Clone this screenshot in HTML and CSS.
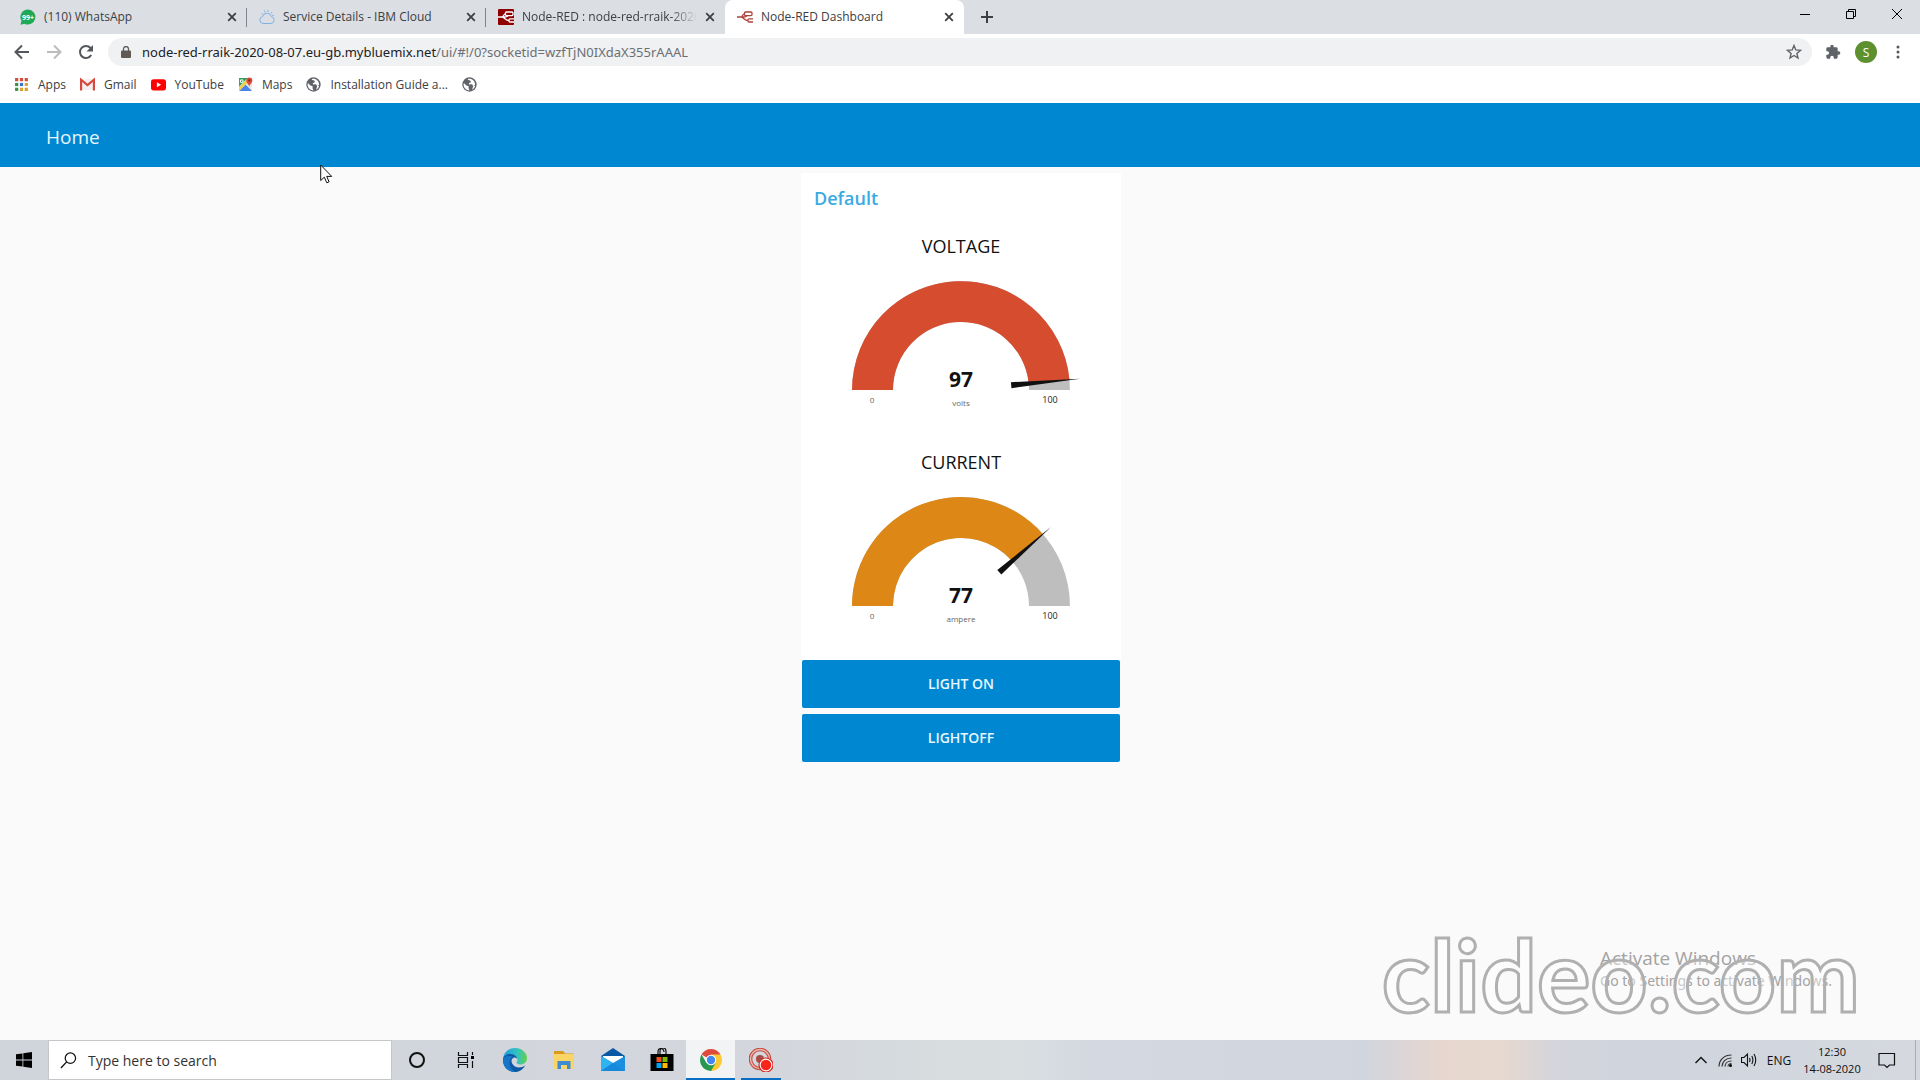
FILE: index.html
```html
<!DOCTYPE html>
<html lang="en">
<head>
<meta charset="utf-8">
<title>Node-RED Dashboard</title>
<link rel="stylesheet" href="styles.css">
</head>
<body>
<svg class="defs" aria-hidden="true">
  <symbol id="close" viewBox="0 0 10 10"><path d="M1.2 1.2l7.6 7.6M8.8 1.2L1.2 8.8" fill="none" stroke="#3c4043" stroke-width="1.8"/></symbol>
  <symbol id="nodered" viewBox="0 0 16 16"><g fill="none" stroke="currentColor" stroke-width="1.3"><rect x="7.5" y="3" width="7.5" height="3.6" rx="1"/><rect x="11" y="9.8" width="6" height="3.2" rx="1"/><path d="M0 8h3.5c2 0 2-3 4-3M0 8h3.5c3.500 0 3.500 3.500 7.500 3.500M4 8h3c2.500 0 2.500-1 3-1.500"/></g></symbol>
  <symbol id="globe" viewBox="0 0 24 24"><circle cx="12" cy="12" r="11.500" fill="#5f6368"/><path d="M3 9.500l4.500 4.500 3 .5v3.500l1.500 3.500c-5 0-9-3.500-9.500-9zM9 3.500c1 2 4.500 1 5 3.500s-3.500 2-3 4 5-.5 6 2 3 1 4-.5c0-5-3-8.500-6.500-9.500-2-.5-4-.5-5.500.5zM18 14.500l3 0c-1 3-2.500 4.500-5 6z" fill="#fff"/></symbol>
</svg>

<header class="browser">
  <nav class="tabs" aria-label="Tabs">
    <div class="tab">
      <svg class="icon16" viewBox="0 0 16 16"><path d="M8 .5a7.500 7.500 0 1 1-3.500 14.200L.5 15.800l1-4A7.500 7.500 0 0 1 8 .5z" fill="#1fa855"/><text x="8" y="11" class="badge">99+</text></svg>
      <span class="tab-title">(110) WhatsApp</span>
      <button class="tab-close" aria-label="Close tab"><svg><use href="#close"/></svg></button>
    </div>
    <div class="tab">
      <svg class="icon16" viewBox="0 0 16 16"><path d="M4 14.500a3.500 3.500 0 0 1-.4-6.900 4.600 4.600 0 0 1 8.900.2 3.400 3.400 0 0 1-.5 6.700zM4 5.500l-1.500-1M6 3.500L5.500 1.500M9 3V1M12 4.500l1-1.500M13 7l2-1" fill="none" stroke="#7fb2e6"/></svg>
      <span class="tab-title">Service Details - IBM Cloud</span>
      <button class="tab-close" aria-label="Close tab"><svg><use href="#close"/></svg></button>
    </div>
    <div class="tab last">
      <svg class="icon16 red-tile" viewBox="0 0 16 16"><use href="#nodered"/></svg>
      <span class="tab-title faded">Node-RED : node-red-rraik-2020</span>
      <button class="tab-close" aria-label="Close tab"><svg><use href="#close"/></svg></button>
    </div>
    <div class="tab active">
      <svg class="icon16 red-mark" viewBox="0 0 16 16"><use href="#nodered"/></svg>
      <span class="tab-title">Node-RED Dashboard</span>
      <button class="tab-close" aria-label="Close tab"><svg><use href="#close"/></svg></button>
    </div>
    <button class="new-tab" aria-label="New tab"><svg viewBox="0 0 12 12"><path d="M6 0v12M0 6h12" stroke="#3c4043" stroke-width="2"/></svg></button>
    <div class="window-controls">
      <button aria-label="Minimize"><svg viewBox="0 0 12 12"><path d="M1 6.500h10" stroke="#000"/></svg></button>
      <button aria-label="Restore"><svg viewBox="0 0 12 12"><path d="M1.500 3.500h7v7h-7zM3.500 3.500v-2h7v7h-2" fill="none" stroke="#000"/></svg></button>
      <button aria-label="Close"><svg viewBox="0 0 12 12"><path d="M1 1l10 10M11 1L1 11" stroke="#000"/></svg></button>
    </div>
  </nav>

  <div class="toolbar">
    <button class="nav-button" aria-label="Back"><svg viewBox="0 0 16 16"><path d="M15 8H2M8 1.500L1.500 8 8 14.500" fill="none" stroke="#54575b" stroke-width="2"/></svg></button>
    <button class="nav-button" aria-label="Forward"><svg viewBox="0 0 16 16"><path d="M1 8h13M8 1.500L14.500 8 8 14.500" fill="none" stroke="#babcbe" stroke-width="2"/></svg></button>
    <button class="nav-button" aria-label="Reload"><svg viewBox="0 0 16 16"><path d="M13.200 11A6 6 0 1 1 12.500 4L14 5.500" fill="none" stroke="#54575b" stroke-width="2"/><path d="M15 1v6.500H8.500z" fill="#54575b"/></svg></button>
    <div class="address">
      <svg class="lock" viewBox="0 0 10 12"><path d="M1 4.500h8a1 1 0 0 1 1 1V11a1 1 0 0 1-1 1H1a1 1 0 0 1-1-1V5.500a1 1 0 0 1 1-1z" fill="#5f5a55"/><path d="M2.500 5V3a2.500 2.500 0 0 1 5 0v2" fill="none" stroke="#5f5a55" stroke-width="1.300"/></svg>
      <a class="url" href="#"><span>node-red-rraik-2020-08-07.eu-gb.mybluemix.net</span>/ui/#!/0?socketid=wzfTjN0IXdaX355rAAAL</a>
      <button class="star" aria-label="Bookmark this tab"><svg viewBox="0 0 16 16"><path d="M8 1.500l1.800 4.400 4.700.4-3.600 3.100 1.100 4.600L8 11.500 4 14l1.100-4.600L1.500 6.300l4.700-.4z" fill="none" stroke="#5f6368" stroke-width="1.400"/></svg></button>
    </div>
    <button class="ext" aria-label="Extensions"><svg viewBox="0 0 24 24"><path d="M20.500 11H19V7a2 2 0 0 0-2-2h-4V3.500a2.500 2.500 0 0 0-5 0V5H4a2 2 0 0 0-2 2v3.800h1.500a2.700 2.700 0 0 1 0 5.400H2V20a2 2 0 0 0 2 2h3.800v-1.500a2.700 2.700 0 0 1 5.400 0V22H17a2 2 0 0 0 2-2v-4h1.500a2.500 2.500 0 0 0 0-5z" fill="#5f6368"/></svg></button>
    <button class="avatar" aria-label="Profile">S</button>
    <button class="menu" aria-label="Menu"><svg viewBox="0 0 4 14"><circle cx="2" cy="2" r="1.500"/><circle cx="2" cy="7" r="1.500"/><circle cx="2" cy="12" r="1.500"/></svg></button>
  </div>

  <nav class="bookmarks" aria-label="Bookmarks">
    <a href="#"><svg viewBox="0 0 14 14"><path d="M1 1h3v3H1zM5.500 1h3v3h-3zM10 1h3v3h-3z" fill="#d0513d"/><path d="M1 5.500h3v3H1z" fill="#3f8f4f"/><path d="M5.500 5.500h3v3h-3z" fill="#3f74d0"/><path d="M10 5.500h3v3h-3zM5.500 10h3v3h-3zM10 10h3v3h-3z" fill="#d9a32e"/><path d="M1 10h3v3H1z" fill="#3f8f4f"/></svg>Apps</a>
    <a href="#"><svg viewBox="0 0 14 14"><path d="M.5 2h13v10H.5z" fill="#f4eeee"/><path d="M1 12.500V2.500l6 5 6-5v10" fill="none" stroke="#d5483b" stroke-width="2"/></svg>Gmail</a>
    <a href="#"><svg viewBox="0 0 14 14"><rect y="2" width="14" height="10.500" rx="2.500" fill="#f00"/><path d="M5.500 5v4.500l4-2.200z" fill="#fff"/></svg>YouTube</a>
    <a href="#"><svg viewBox="0 0 14 14"><path d="M1 1h12v12H1z" fill="#e8e8e4"/><path d="M1 1h8L1 9z" fill="#2f9e58"/><path d="M1 13l6-6 6 6z" fill="#4a84e8"/><path d="M1 13V9.500L9.500 1l1.500 2L1 13z" fill="#f3cf4b"/><path d="M10.500 9C10 6.500 7.800 6 7.800 3.200a2.800 2.800 0 0 1 5.600 0C13.400 6 11 6.500 10.500 9z" fill="#dd4b3e"/><circle cx="10.600" cy="3.200" r="1" fill="#7d2019"/><circle cx="3.500" cy="3.800" r="1.300" fill="none" stroke="#fff"/></svg>Maps</a>
    <a href="#"><svg><use href="#globe"/></svg>Installation Guide a...</a>
    <a href="#" aria-label="Untitled bookmark"><svg><use href="#globe"/></svg></a>
  </nav>
</header>

<div class="page-header"><h1>Home</h1></div>

<main class="dashboard">
  <section class="group">
    <div class="card">
      <h2>Default</h2>
      <div class="gauge">
        <h3>VOLTAGE</h3>
        <svg viewBox="0 0 320 150" role="img" aria-label="97 volts">
          <path d="M51 122A109 109 0 0 1 269 122H228A68 68 0 0 0 92 122z" fill="#bebebe"/>
          <path d="M51 122A109 109 0 0 1 268.500 111.700L227.700 115.600A68 68 0 0 0 92 122z" fill="#d64c2f"/>
          <path d="M209.900 114.200L279 110.700 210.500 120.200z" fill="#111"/>
          <text x="160" y="119" class="value">97</text>
          <text x="160" y="138" class="units">volts</text>
          <text x="71" y="135" class="min">0</text>
          <text x="249" y="135" class="max">100</text>
        </svg>
      </div>
      <div class="gauge">
        <h3>CURRENT</h3>
        <svg viewBox="0 0 320 150" role="img" aria-label="77 ampere">
          <path d="M51 122A109 109 0 0 1 269 122H228A68 68 0 0 0 92 122z" fill="#bebebe"/>
          <path d="M51 122A109 109 0 0 1 241.800 49.900L211 77A68 68 0 0 0 92 122z" fill="#dc8716"/>
          <path d="M196.300 86L250 43 200.300 90.500z" fill="#111"/>
          <text x="160" y="119" class="value">77</text>
          <text x="160" y="138" class="units">ampere</text>
          <text x="71" y="135" class="min">0</text>
          <text x="249" y="135" class="max">100</text>
        </svg>
      </div>
    </div>
    <div class="actions">
      <button>LIGHT ON</button>
      <button>LIGHTOFF</button>
    </div>
  </section>

  <div class="activation">
    <strong>Activate Windows</strong>
    <span>Go to Settings to activate Windows.</span>
  </div>
  <div class="watermark">clideo.com</div>
</main>

<footer class="taskbar">
  <button class="start" aria-label="Start"><svg viewBox="0 0 16 16"><path d="M0 2.300L6.500 1.400v6.200H0zM7.300 1.300L16 0v7.600H7.300zM0 8.400h6.500v6.200L0 13.700zM7.300 8.400H16V16l-8.700-1.300z"/></svg></button>
  <label class="search">
    <svg viewBox="0 0 18 18"><circle cx="11" cy="6.500" r="5.500" fill="none" stroke="#111" stroke-width="1.300"/><path d="M7 10.500L1 17" stroke="#111" stroke-width="1.400"/></svg>
    <input type="text" placeholder="Type here to search" aria-label="Search">
  </label>
  <div class="apps">
    <button aria-label="Cortana"><svg viewBox="0 0 24 24"><circle cx="12" cy="12" r="7" fill="none" stroke="#111" stroke-width="2"/></svg></button>
    <button aria-label="Task View"><svg viewBox="0 0 24 24"><path d="M4.500 4v3.500h9V4M4.500 20v-3.500h9V20M4.500 9.500h9v5h-9zM18.500 4v3M18.500 13v7" fill="none" stroke="#111" stroke-width="1.200"/><path d="M17 8h3v3h-3z"/></svg></button>
    <button aria-label="Microsoft Edge"><svg viewBox="0 0 24 24"><defs><linearGradient id="edge-top"><stop stop-color="#1f9be0"/><stop offset=".6" stop-color="#32c3c0"/><stop offset="1" stop-color="#62d14a"/></linearGradient></defs><path d="M0 12C0 5 5 0 12 0s12 5 12 10-4 6.500-7 6.500-4-1.500-3-3 .5-4.500-3-4.500-6 3-6 8z" fill="url(#edge-top)"/><path d="M0 12c0-4 4-6.500 8-6 4 .5 6 3 6 5-1-1.500-3-2-4.500-.5-3 3 1 9 6 9 3 0 5-1 6.500-2C20 21.500 16.500 24 12 24 5 24 0 19 0 12z" fill="#0c59a4"/><path d="M7 12c-1.500 5 1 10 6 12C6 24.500 0 19 0 12c0-2 3-4 6-4 2 0 3 .5 4 1.200C8.500 9.500 7.500 10.500 7 12z" fill="#1676c8"/></svg></button>
    <button aria-label="File Explorer"><svg viewBox="0 0 24 24"><path d="M2 3h9l2 2.500h9V8H2z" fill="#d99a1d"/><path d="M2 6h20v15H2z" fill="#fbd468"/><path d="M5.500 21v-8h13v8h-3.500v-4h-6v4z" fill="#3f8dd0"/></svg></button>
    <button aria-label="Mail"><svg viewBox="0 0 24 24"><path d="M0 8l12-8 12 8v3H0z" fill="#0a58a5"/><path d="M2 8h20v9H2z" fill="#fff"/><path d="M0 8l12 7 12-7v15H0z" fill="#1d8fe0"/><path d="M0 8l12 7L0 23z" fill="#30b4f0"/><path d="M0 23l12-8 12 8z" fill="#1689dc"/></svg></button>
    <button aria-label="Microsoft Store"><svg viewBox="0 0 24 24"><path d="M8 7V4a3 3.500 0 0 1 6 0M10 6V3a3 3 0 0 1 6 0v4" fill="none" stroke="#111" stroke-width="1.200"/><path d="M.5 6h23v17H.5z"/><path d="M6.500 9h5v5h-5z" fill="#f25022"/><path d="M12.500 9h5v5h-5z" fill="#7fba00"/><path d="M6.500 15h5v5h-5z" fill="#00a4ef"/><path d="M12.500 15h5v5h-5z" fill="#ffb900"/></svg></button>
    <button class="current" aria-label="Google Chrome"><svg viewBox="0 0 24 24"><path d="M12 12L2.500 6.500A11 11 0 0 1 21.500 6.500z" fill="#e04a3d"/><path d="M12 12V6.500h9.500A11 11 0 0 1 12 23z" fill="#fbc934"/><path d="M12 12l4.500 3L12 23A11 11 0 0 1 2.500 6.500L7.500 15z" fill="#27994f"/><circle cx="12" cy="12" r="5.200" fill="#fff"/><circle cx="12" cy="12" r="4.200" fill="#4387f0"/></svg></button>
    <button class="running" aria-label="Screen recorder"><svg viewBox="0 0 24 24"><circle cx="11" cy="11" r="9.500" fill="none" stroke="#bf4a42" stroke-width="3.500"/><circle cx="11" cy="11" r="9.500" fill="none" stroke="#f2b8ae" stroke-width="1.400"/><circle cx="11" cy="11" r="4" fill="#a94a44"/><circle cx="17" cy="17" r="7" fill="#fff" stroke="#d8251b" stroke-width="1.200"/><circle cx="17" cy="17" r="5.300" fill="#f6261b"/></svg></button>
  </div>
  <div class="tray">
    <button class="tray-icon" aria-label="Show hidden icons"><svg viewBox="0 0 16 16"><path d="M2.500 11L8 5.500l5.500 5.500" fill="none" stroke="#111" stroke-width="1.400"/></svg></button>
    <button class="tray-icon" aria-label="Network"><svg viewBox="0 0 16 16"><path d="M2 14.500C2 8 7 3 14.500 3M5 14.500C5 10 8.500 6 14.500 6M8 14.500C8 11.500 10.500 9 14.500 9M11 14.500c0-1.500 1.500-3 3.500-3" fill="none" stroke="#333" stroke-width="1.200"/><circle cx="13.500" cy="13.500" r="1.500"/></svg></button>
    <button class="tray-icon" aria-label="Volume"><svg viewBox="0 0 16 16"><path d="M.5 5.500h2.500L6.500 2v12L3 10.500H.5zM8.500 6q1 2 0 4M10.800 4q2.200 4 0 8M13 2q3.500 6 0 12" fill="none" stroke="#111" stroke-width="1.100"/></svg></button>
    <button class="language">ENG</button>
    <div class="clock"><time>12:30</time><time>14-08-2020</time></div>
    <button class="notifications" aria-label="Notifications"><svg viewBox="0 0 18 18"><path d="M1 2.500h15.500v11.500h-5L9 16.500 6.500 14H1z" fill="none" stroke="#111" stroke-width="1.200"/></svg></button>
  </div>
</footer>

<svg class="cursor" viewBox="0 0 13 20" aria-hidden="true"><path d="M.7 1v15.500l3.600-3.300 2.500 5.600 2.300-1-2.400-5.400h5z" fill="#fff" stroke="#111"/></svg>
</body>
</html>
```

FILE: styles.css
```css
* { box-sizing: border-box; }

body {
  margin: 0;
  min-height: 100vh;
  display: flex;
  flex-direction: column;
  position: relative;
  background: #fafafa;
  font-family: "Open Sans", "Noto Sans", sans-serif;
  color: #3c4043;
}

button {
  padding: 0;
  border: 0;
  background: none;
  color: inherit;
  font: inherit;
  display: flex;
  align-items: center;
  justify-content: center;
}

a { color: inherit; text-decoration: none; }
svg { display: block; flex: none; }
h1, h2, h3 { margin: 0; font-weight: 400; }
.defs { position: absolute; width: 0; height: 0; }

/* Browser chrome */
.browser { background: #fff; font-size: 12px; }

.tabs {
  height: 34px;
  padding-left: 8px;
  display: flex;
  background: #dbdfe4;
}

.tab {
  width: 239px;
  padding: 0 10px 0 12px;
  display: flex;
  align-items: center;
  gap: 8px;
  position: relative;
}

.tab:not(.last, .active)::after {
  content: "";
  position: absolute;
  right: 0;
  top: 8px;
  width: 1px;
  height: 19px;
  background: #80858b;
}

.tab.active { background: #fff; border-radius: 8px 8px 0 0; }
.icon16 { width: 16px; height: 16px; }
.badge { font: 700 7px "Open Sans", sans-serif; fill: #fff; text-anchor: middle; }
.red-tile { background: #8f0000; color: #fff; border-radius: 1px; }
.red-mark { color: #b0423c; }
.tab-title { flex: 1; min-width: 0; white-space: nowrap; line-height: 18px; }
.faded { -webkit-mask-image: linear-gradient(90deg, #000 85%, transparent); mask-image: linear-gradient(90deg, #000 85%, transparent); }
.tab-close { width: 10px; height: 10px; }
.tab-close svg { width: 10px; height: 10px; }
.new-tab { width: 28px; height: 34px; margin-left: 9px; }
.new-tab svg { width: 12px; height: 12px; }
.window-controls { margin-left: auto; display: flex; }
.window-controls button { width: 46px; height: 28px; }
.window-controls svg { width: 12px; height: 12px; }

.toolbar {
  height: 36px;
  padding: 0 8px 0 6px;
  display: flex;
  align-items: center;
}

.nav-button { width: 32px; height: 28px; }
.nav-button svg { width: 16px; height: 16px; }

.address {
  flex: 1;
  height: 28px;
  margin: 0 6px;
  padding: 0 10px 0 13px;
  display: flex;
  align-items: center;
  gap: 11px;
  background: #f0f1f3;
  border-radius: 14px;
}

.lock { width: 10px; height: 12px; }
.url { flex: 1; font-family: "Noto Sans", sans-serif; font-size: 13px; color: #6b6f73; white-space: nowrap; }
.url span { color: #202124; }
.star svg, .ext svg { width: 16px; height: 16px; }
.ext { width: 30px; }
.avatar {
  width: 22px;
  height: 22px;
  margin: 0 7px;
  border-radius: 50%;
  background: #5d9130;
  color: #fff;
  font-size: 12px;
}
.menu { width: 28px; }
.menu svg { width: 4px; height: 14px; fill: #54575b; }

.bookmarks {
  height: 33px;
  padding: 0 14px 5px;
  display: flex;
  align-items: center;
  gap: 14px;
}
.bookmarks a { display: flex; align-items: center; gap: 9px; }
.bookmarks svg { width: 15px; height: 15px; }

/* Dashboard */
.page-header {
  height: 64px;
  padding: 4px 46px 0;
  display: flex;
  align-items: center;
  background: #0087d1;
  color: #e6f7ff;
}
.page-header h1 { font-size: 19px; line-height: 28px; }

.dashboard {
  flex: 1;
  padding: 6px 0 6px 2px;
  display: flex;
  justify-content: center;
  align-items: flex-start;
  position: relative;
}

.group { width: 320px; }
.card { background: #fff; padding-bottom: 7px; }

.group h2 {
  padding: 12px 13px 10px;
  font-size: 18px;
  line-height: 26px;
  font-weight: 600;
  color: #3aabe2;
}

.gauge { height: 216px; text-align: center; }
.gauge h3 { padding-top: 13px; font-size: 18px; font-weight: 500; line-height: 24px; color: #111; }
.gauge svg { width: 100%; margin-top: 10px; }
.gauge text { text-anchor: middle; fill: #666; font-size: 8px; }
.gauge .value { font-size: 21px; font-weight: 700; fill: #111; }
.gauge .max { font-size: 9px; fill: #222; }

.actions { padding: 0 1px; display: grid; gap: 6px; }
.actions button {
  height: 48px;
  padding-bottom: 2px;
  border-radius: 2px;
  background: #0087d1;
  color: #e6f7ff;
  font-size: 14px;
  font-weight: 600;
}

.activation {
  position: absolute;
  right: 84px;
  bottom: 49px;
  width: 236px;
  color: #a3a3a3;
  white-space: nowrap;
}
.activation strong { display: block; font-size: 19px; line-height: 26px; font-weight: 400; }
.activation span { display: block; font-family: "Noto Sans", sans-serif; font-size: 14px; line-height: 20px; }

.watermark {
  position: absolute;
  right: 60px;
  bottom: 17px;
  font: 700 100px/100px Lato, sans-serif;
  color: rgba(255, 255, 255, 0.4);
  -webkit-text-stroke: 3px #b0b0b0;
}

/* Taskbar */
.taskbar {
  height: 40px;
  display: flex;
  background: linear-gradient(90deg, #d0d5dc 0, #d3d6dc 40%, #d9dfe0 53%, #d3d8e1 57%, #d1d5de 71%, #e6d6cf 75%, #e7d9cf 78%, #d4d5db 81%, #cfd4dd 85%, #d5d8df 100%);
  color: #111;
}
.start { width: 48px; }
.start svg { width: 16px; height: 16px; }

.search {
  width: 344px;
  padding: 0 11px;
  display: flex;
  align-items: center;
  gap: 11px;
  background: #fff;
  border: 1px solid #c4c6c9;
}
.search svg { width: 17px; height: 17px; }
.search input { flex: 1; min-width: 0; padding: 0; border: 0; outline: 0; background: none; font: 14px "Open Sans", sans-serif; color: #333; }
.search input::placeholder { color: #333; opacity: 1; }

.apps { display: flex; }
.apps button { width: 49px; height: 40px; }
.apps svg { width: 24px; height: 24px; }
.apps .current { background: #f2f3f5; box-shadow: inset 0 -2px #0a6fc4; }
.apps .running { box-shadow: inset 0 -2px #0a6fc4; width: 40px; margin-left: 6px; }

.tray { margin-left: auto; padding-right: 4px; display: flex; align-items: center; font-size: 12px; }
.tray-icon { width: 24px; height: 40px; }
.tray-icon svg { width: 16px; height: 16px; }
.language { width: 40px; padding-right: 4px; }
.clock { width: 62px; text-align: center; line-height: 17px; font-size: 11px; }
.clock time { display: block; }
.notifications { width: 53px; height: 40px; padding-right: 4px; border-right: 1px solid #a9adb3; }
.notifications svg { width: 18px; height: 18px; }

.cursor { position: absolute; left: 320px; top: 164px; width: 13px; height: 20px; }
```
